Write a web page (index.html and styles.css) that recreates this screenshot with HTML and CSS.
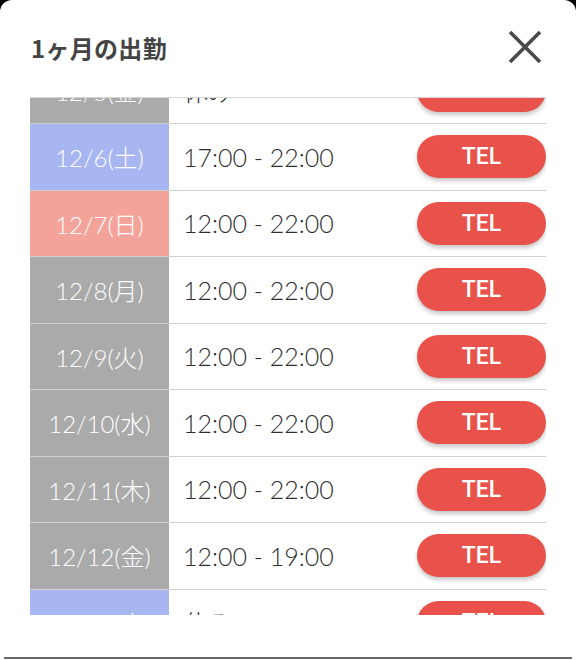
FILE: index.html
```html
<!DOCTYPE html>
<html lang="ja">
<head>
<meta charset="utf-8">
<title>1ヶ月の出勤</title>
<link rel="stylesheet" href="styles.css">
</head>
<body>
<div class="modal">
  <div class="header">
    <h1 class="title">1ヶ月の出勤</h1>
    <button class="close" aria-label="閉じる">
      <svg width="34" height="34" viewBox="0 0 34 34"><path d="M2 2 L32 32 M32 2 L2 32" stroke="#4a4a4a" stroke-width="3.6" stroke-linecap="butt" fill="none"/></svg>
    </button>
  </div>
  <div class="list">
    <div class="rows">
      <div class="row"><div class="date gray">12/5(金)</div><div class="time">休み</div><button class="tel">TEL</button></div>
      <div class="row"><div class="date blue">12/6(土)</div><div class="time">17:00 - 22:00</div><button class="tel">TEL</button></div>
      <div class="row"><div class="date pink">12/7(日)</div><div class="time">12:00 - 22:00</div><button class="tel">TEL</button></div>
      <div class="row"><div class="date gray">12/8(月)</div><div class="time">12:00 - 22:00</div><button class="tel">TEL</button></div>
      <div class="row"><div class="date gray">12/9(火)</div><div class="time">12:00 - 22:00</div><button class="tel">TEL</button></div>
      <div class="row"><div class="date gray">12/10(水)</div><div class="time">12:00 - 22:00</div><button class="tel">TEL</button></div>
      <div class="row"><div class="date gray">12/11(木)</div><div class="time">12:00 - 22:00</div><button class="tel">TEL</button></div>
      <div class="row"><div class="date gray">12/12(金)</div><div class="time">12:00 - 19:00</div><button class="tel">TEL</button></div>
      <div class="row"><div class="date blue">12/13(土)</div><div class="time">休み</div><button class="tel">TEL</button></div>
    </div>
  </div>
  <div class="bottom-line"></div>
</div>
</body>
</html>
```
FILE: styles.css
```css
html, body {
  margin: 0;
  padding: 0;
  background: #000;
}
body {
  width: 576px;
  height: 660px;
  overflow: hidden;
}
.modal {
  background: #fff;
  height: 660px;
  border-radius: 12px 12px 0 0;
  display: flex;
  flex-direction: column;
}
.header {
  height: 94px;
  padding: 0 34px 0 31px;
  display: flex;
  align-items: center;
  justify-content: space-between;
}
.title {
  margin: 0;
  font-family: "Noto Sans CJK JP", "Noto Sans", sans-serif;
  font-weight: 700;
  font-size: 24px;
  color: #444;
  letter-spacing: 0.3px;
}
.close {
  border: 0;
  background: none;
  padding: 0;
  width: 34px;
  height: 34px;
  display: block;
}
.close svg { display: block; }
.list {
  margin: 3px 30px 0 30px;
  height: 517px;
  border-top: 1px solid #d6d6d6;
  overflow: hidden;
}
.rows {
  margin-top: -40.5px;
}
.row {
  height: 65.5px;
  border-bottom: 1px solid #d0d0d0;
  display: flex;
  align-items: center;
}
.date {
  width: 139px;
  height: 100%;
  display: flex;
  align-items: center;
  justify-content: center;
  color: #fff;
  font-family: Lato, "Noto Sans CJK JP", sans-serif;
  font-weight: 300;
  font-size: 24px;
}
.gray { background: #aaaaaa; }
.blue { background: #a7b6f1; }
.pink { background: #f4a39b; }
.time {
  flex: 1;
  padding-left: 14px;
  font-family: Lato, "Noto Sans CJK JP", sans-serif;
  font-weight: 300;
  font-size: 25px;
  color: #2e2e2e;
}
.tel {
  width: 129px;
  height: 43px;
  border: 0;
  border-radius: 22px;
  background: #e8524a;
  color: #fff;
  font-family: Roboto, sans-serif;
  font-weight: 500;
  font-size: 23px;
  padding: 0;
  box-shadow: 0 3px 4px rgba(0, 0, 0, 0.22);
}
.bottom-line {
  margin: auto 4px 1px 4px;
  height: 2px;
  background: #666;
}
```
